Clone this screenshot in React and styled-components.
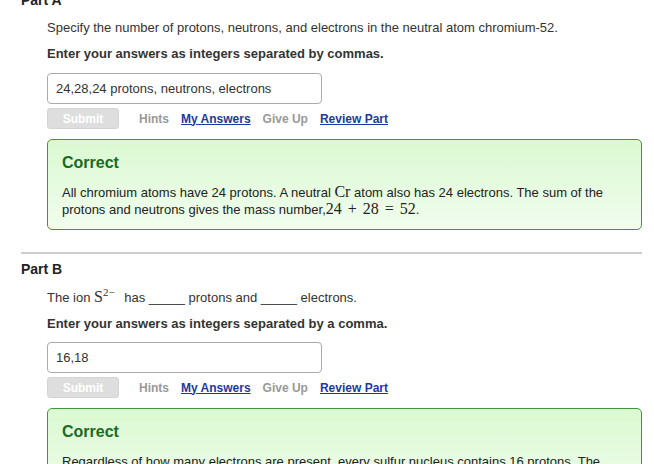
import React from 'react';
import styled, { createGlobalStyle } from 'styled-components';

const GlobalStyle = createGlobalStyle`
  html, body {
    margin: 0;
    padding: 0;
    background: #fff;
    overflow: hidden;
  }
  body {
    font-family: "Liberation Sans", Arial, sans-serif;
    color: #333;
  }
`;

const Page = styled.div`
  width: 654px;
  height: 464px;
  overflow: hidden;
  padding: 0 12px 0 21px;
  box-sizing: border-box;
`;

const Part = styled.section`
  margin-top: ${(p) => p.$top || 0}px;
`;

const PartTitle = styled.h2`
  margin: 0;
  font-size: 14px;
  line-height: 16px;
  font-weight: bold;
  color: #222;
`;

const Body = styled.div`
  padding-left: 26px;
`;

const Prompt = styled.p`
  margin: ${(p) => p.$top}px 0 0;
  font-size: 13px;
  line-height: 16px;
  font-weight: ${(p) => (p.$bold ? 'bold' : 'normal')};
  color: #333;
`;

const Math = styled.span`
  font-family: "Liberation Serif", "Times New Roman", serif;
  font-size: 16px;
  line-height: 0;
  word-spacing: 2px;
`;

const Sup = styled.sup`
  font-family: "Liberation Serif", "Times New Roman", serif;
  font-size: 11px;
  vertical-align: 6px;
  line-height: 0;
  margin-right: 6px;
`;

const AnswerBox = styled.div`
  margin-top: ${(p) => p.$top}px;
  width: 275px;
  height: 31px;
  box-sizing: border-box;
  border: 1px solid #aaa;
  border-radius: 4px;
  padding: 0 8px;
  display: flex;
  align-items: center;
  font-size: 13px;
  color: #333;
`;

const Actions = styled.div`
  margin-top: 4px;
  display: flex;
  align-items: center;
  font-size: 12px;
  font-weight: bold;
`;

const SubmitButton = styled.button`
  width: 72px;
  height: 21px;
  margin-right: 20px;
  border: 1px solid #d4d4d4;
  border-radius: 3px;
  background: #dedede;
  color: #fff;
  font-family: inherit;
  font-size: 12px;
  font-weight: bold;
  padding: 0;
`;

const ActionLink = styled.span`
  margin-right: 12px;
  color: ${(p) => (p.$active ? '#1c3a9e' : '#999')};
  text-decoration: ${(p) => (p.$active ? 'underline' : 'none')};
`;

const Feedback = styled.div`
  margin-top: 10px;
  box-sizing: border-box;
  border: 1px solid #3a9a3a;
  border-radius: 5px;
  background: linear-gradient(#daf9d1, #f1fdee);
  padding: 13px 14px 11px;
`;

const FeedbackTitle = styled.div`
  font-size: 16px;
  line-height: 20px;
  font-weight: bold;
  color: #1b6b1f;
`;

const FeedbackText = styled.p`
  margin: 11px 0 0;
  font-size: 13px;
  line-height: 17px;
  color: #222;
`;

const Divider = styled.hr`
  margin: 22px 0 0;
  border: 0;
  height: 2px;
  background: #cdcdcd;
`;

const ActionRow = () => (
  <Actions>
    <SubmitButton disabled>Submit</SubmitButton>
    <ActionLink>Hints</ActionLink>
    <ActionLink $active>My Answers</ActionLink>
    <ActionLink>Give Up</ActionLink>
    <ActionLink $active>Review Part</ActionLink>
  </Actions>
);

export default function App() {
  return (
    <Page>
      <GlobalStyle />
      <Part $top={-8}>
        <PartTitle>Part A</PartTitle>
        <Body>
          <Prompt $top={12}>
            Specify the number of protons, neutrons, and electrons in the neutral atom chromium-52.
          </Prompt>
          <Prompt $top={10} $bold>Enter your answers as integers separated by commas.</Prompt>
          <AnswerBox $top={11}>24,28,24 protons, neutrons, electrons</AnswerBox>
          <ActionRow />
          <Feedback>
            <FeedbackTitle>Correct</FeedbackTitle>
            <FeedbackText>
              All chromium atoms have 24 protons. A neutral <Math>Cr</Math> atom also has 24 electrons. The sum of the
              protons and neutrons gives the mass number,<Math>24 + 28 = 52</Math>.
            </FeedbackText>
          </Feedback>
        </Body>
      </Part>
      <Divider />
      <Part $top={7}>
        <PartTitle>Part B</PartTitle>
        <Body>
          <Prompt $top={13}>
            The ion <Math>S</Math><Sup>2−</Sup> has _____ protons and _____ electrons.
          </Prompt>
          <Prompt $top={10} $bold>Enter your answers as integers separated by a comma.</Prompt>
          <AnswerBox $top={10}>16,18</AnswerBox>
          <ActionRow />
          <Feedback>
            <FeedbackTitle>Correct</FeedbackTitle>
            <FeedbackText>
              Regardless of how many electrons are present, every sulfur nucleus contains 16 protons. The
              number of electrons is 18.
            </FeedbackText>
          </Feedback>
        </Body>
      </Part>
    </Page>
  );
}
